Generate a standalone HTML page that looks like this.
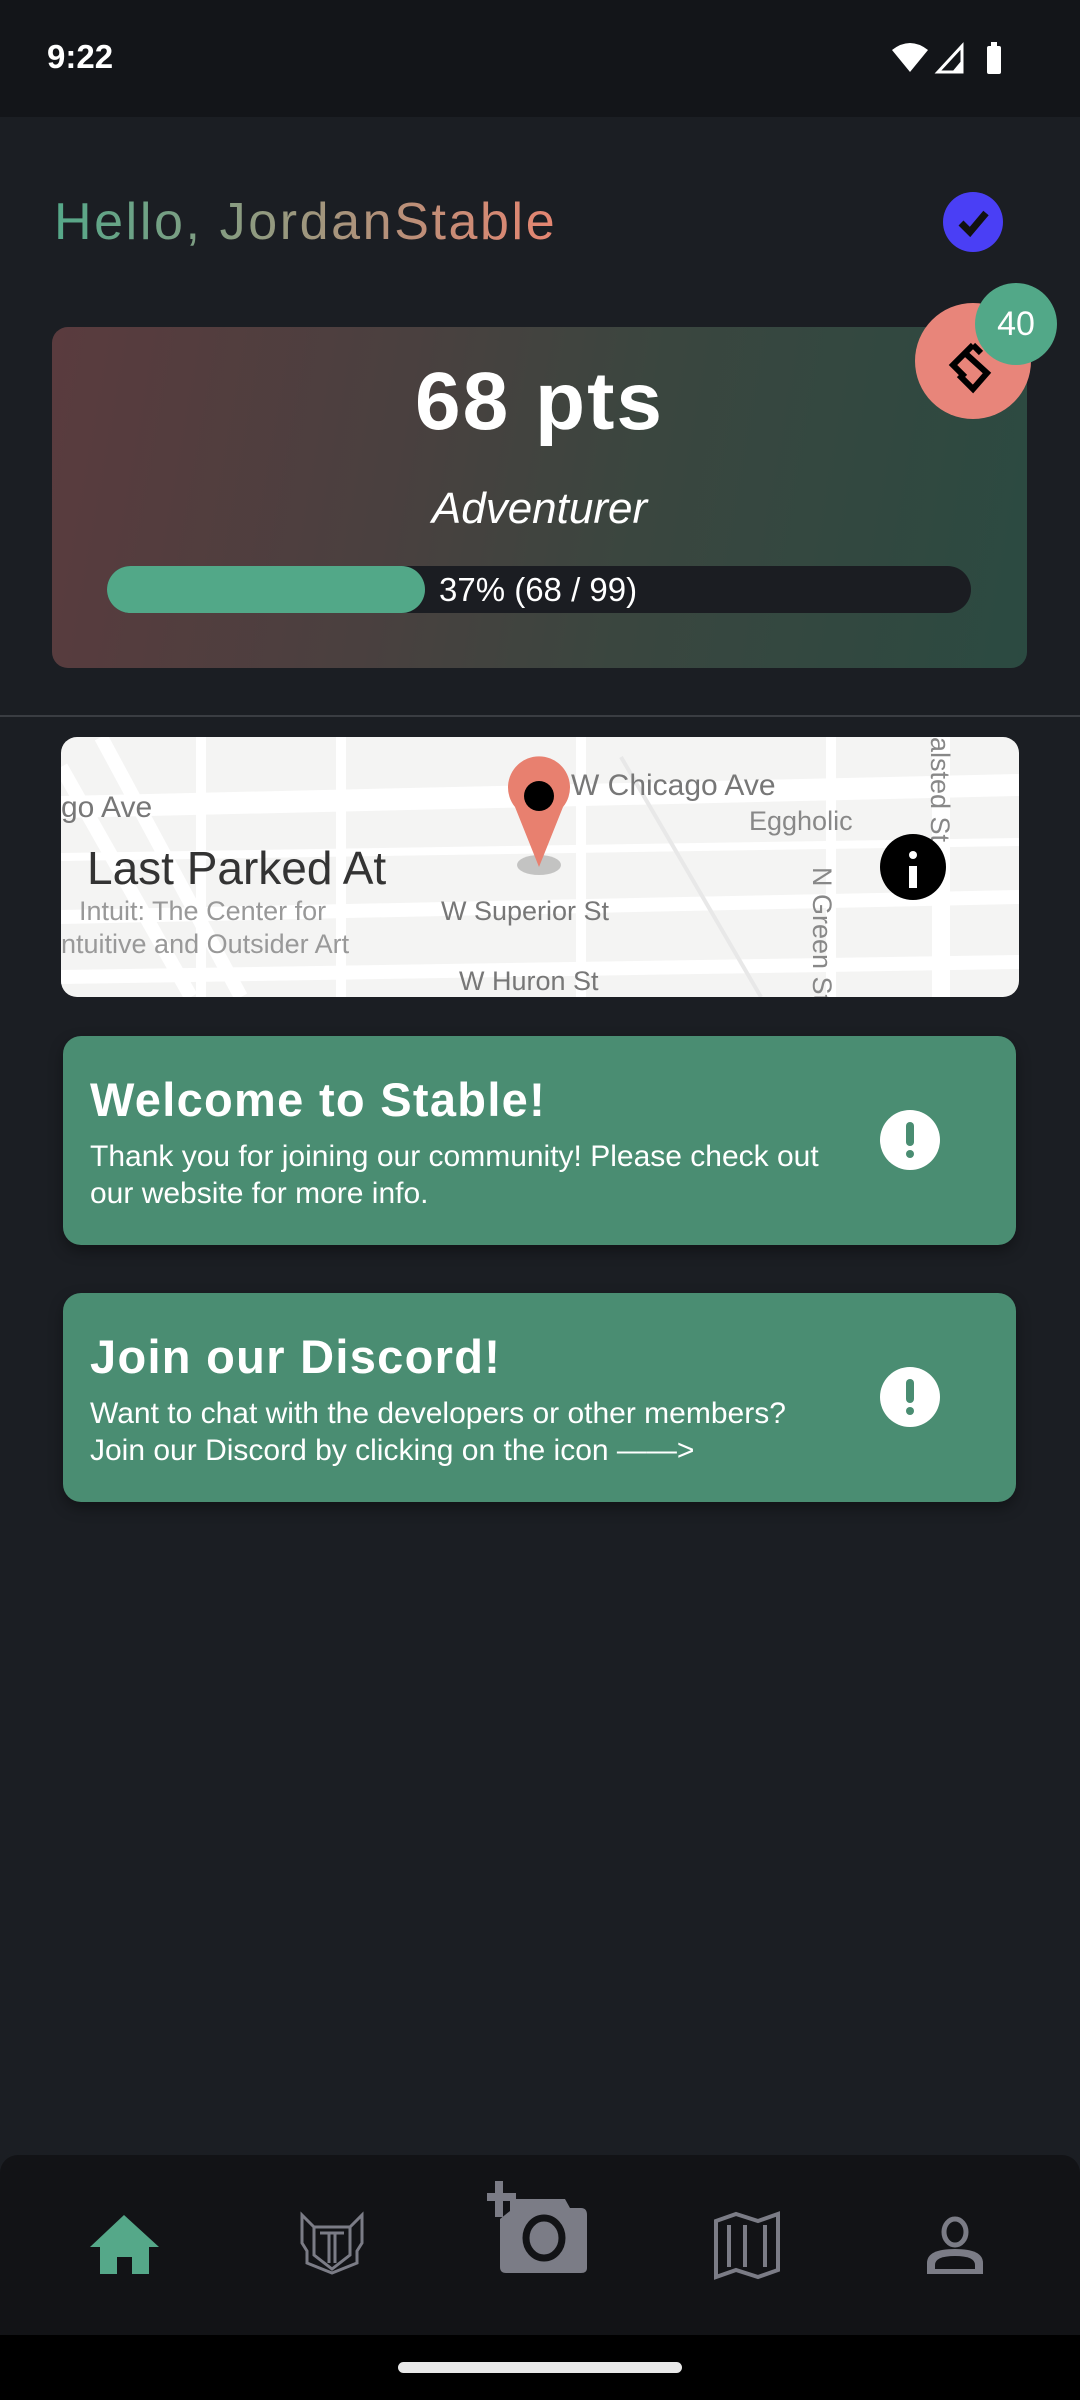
<!DOCTYPE html>
<html><head><meta charset="utf-8"><style>
*{margin:0;padding:0;box-sizing:border-box}
body{width:1080px;height:2400px;background:#1b1e23;font-family:"Liberation Sans",sans-serif;position:relative;overflow:hidden;color:#fff}
.abs{position:absolute}
.card{position:absolute;left:63px;width:953px;background:#4a8d72;border-radius:18px;box-shadow:0 6px 14px rgba(0,0,0,.35)}
.card h2{position:absolute;left:27px;font-size:47px;font-weight:bold;letter-spacing:1.3px}
.card p{position:absolute;left:27px;font-size:30px;line-height:37px;width:730px}
.ex{position:absolute;left:817px;width:60px;height:60px;border-radius:50%;background:#fff}
.ex:before{content:"";position:absolute;left:26px;top:12px;width:8px;height:24px;background:#4a8d72;border-radius:4px}
.ex:after{content:"";position:absolute;left:26px;top:40px;width:8px;height:8px;background:#4a8d72;border-radius:50%}
</style></head><body>
<div class="abs" style="left:0;top:0;width:1080px;height:117px;background:#131519"></div>
<div class="abs" style="left:47px;top:38px;font-size:33px;font-weight:bold;color:#fff">9:22</div>
<svg class="abs" style="left:890px;top:40px" width="120" height="36" viewBox="0 0 120 36">
<path d="M2 10 Q20 -4 38 10 L20 32 Z" fill="#fff"/>
<path d="M48 32 L72 6 L72 32 Z" fill="none" stroke="#fff" stroke-width="3"/>
<path d="M62 32 L72 20 L72 32Z" fill="#fff"/>
<rect x="97" y="6" width="14" height="28" rx="2" fill="#fff"/><rect x="101" y="2" width="6" height="5" fill="#fff"/>
</svg>
<div class="abs" style="left:54px;top:192px;font-size:52px;letter-spacing:2.6px;background:linear-gradient(90deg,#55a889,#8f9a80 40%,#e68571);-webkit-background-clip:text;color:transparent">Hello, JordanStable</div>
<div class="abs" style="left:943px;top:192px;width:60px;height:60px;border-radius:50%;background:#4a3ff5"></div>
<svg class="abs" style="left:943px;top:192px" width="60" height="60"><path d="M18 31 L27 40 L43 21" fill="none" stroke="#111" stroke-width="7"/></svg>

<div class="abs" style="left:52px;top:327px;width:975px;height:341px;border-radius:16px;background:linear-gradient(100deg,#5a3b3e 0%,#4a403f 35%,#3a463f 60%,#2b4a41 100%)"></div>
<div class="abs" style="left:52px;top:355px;width:975px;text-align:center;font-size:82px;font-weight:bold;letter-spacing:2px">68 pts</div>
<div class="abs" style="left:52px;top:484px;width:975px;text-align:center;font-size:44px;font-style:italic">Adventurer</div>
<div class="abs" style="left:107px;top:566px;width:864px;height:47px;border-radius:24px;background:#1b1d22"></div>
<div class="abs" style="left:107px;top:566px;width:318px;height:47px;border-radius:24px;background:#52a888"></div>
<div class="abs" style="left:439px;top:571px;font-size:33px">37% (68 / 99)</div>
<div class="abs" style="left:915px;top:303px;width:116px;height:116px;border-radius:50%;background:#e8857a"></div>
<svg class="abs" style="left:915px;top:303px" width="116" height="116"><path d="M58 42 L38 62 L50 74 M50 50 L72 70 L58 86 L44 72 M58 42 L66 50" fill="none" stroke="#000" stroke-width="6"/></svg>
<div class="abs" style="left:975px;top:283px;width:82px;height:82px;border-radius:50%;background:#52a888;text-align:center;line-height:82px;font-size:34px">40</div>

<div class="abs" style="left:0;top:715px;width:1080px;height:2px;background:#3a3d42"></div>

<div class="abs" style="left:61px;top:737px;width:958px;height:260px;border-radius:16px;background:#f4f4f3;overflow:hidden">
<svg width="958" height="260" style="position:absolute;left:0;top:0">
<g stroke="#fff" fill="none">
<path d="M0 70 L958 48" stroke-width="22"/>
<path d="M0 180 L958 160" stroke-width="14"/>
<path d="M0 240 L958 225" stroke-width="14"/>
<path d="M0 120 L958 105" stroke-width="8"/>
<path d="M520 0 L520 260 M280 0 L280 260 M140 0 L140 260 M770 0 L770 260" stroke-width="10"/>
<path d="M0 30 L130 260 M40 0 L180 260" stroke-width="14"/>
<path d="M880 0 L880 260" stroke-width="18"/>
<path d="M560 20 L700 260" stroke="#e8e8e8" stroke-width="4"/>
</g>
<g fill="#8a8a8a" font-family="Liberation Sans,sans-serif" font-size="27">
<text x="510" y="58" fill="#777" font-size="30">W Chicago Ave</text>
<text x="0" y="80" fill="#777" font-size="30">go Ave</text>
<text x="688" y="93" fill="#888">Eggholic</text>
<text x="380" y="183" fill="#777">W Superior St</text>
<text x="398" y="253" fill="#777">W Huron St</text>
<text x="18" y="183" fill="#999">Intuit: The Center for</text>
<text x="0" y="216" fill="#999">ntuitive and Outsider Art</text>
<text transform="translate(752,130) rotate(90)" fill="#888">N Green St</text>
<text transform="translate(870,0) rotate(90)" fill="#888">alsted St</text>
</g>
<ellipse cx="478" cy="128" rx="22" ry="10" fill="#000" opacity=".2"/>
<path d="M478 130 L454 70 A31 31 0 1 1 502 70 Z" fill="#e8806f"/>
<circle cx="478" cy="59" r="15" fill="#000"/>
</svg>
<div class="abs" style="left:26px;top:104px;font-size:46px;color:#333">Last Parked At</div>
<div class="abs" style="left:819px;top:97px;width:66px;height:66px;border-radius:50%;background:#000"></div>
<div class="abs" style="left:848px;top:129px;width:8px;height:22px;background:#fff"></div>
<div class="abs" style="left:848px;top:114px;width:8px;height:8px;background:#fff;border-radius:50%"></div>
</div>

<div class="card" style="top:1036px;height:209px">
<h2 style="top:36px">Welcome to Stable!</h2>
<p style="top:102px">Thank you for joining our community! Please check out our website for more info.</p>
<div class="ex" style="top:74px"></div>
</div>
<div class="card" style="top:1293px;height:209px">
<h2 style="top:36px">Join our Discord!</h2>
<p style="top:102px">Want to chat with the developers or other members? Join our Discord by clicking on the icon ——&gt;</p>
<div class="ex" style="top:74px"></div>
</div>

<div class="abs" style="left:0;top:2155px;width:1080px;height:185px;background:#121316;border-radius:18px 18px 0 0"></div>
<svg class="abs" style="left:0;top:2155px" width="1080" height="185">
<path d="M124 60 L159 92 L90 92 Z" fill="#55a889"/>
<rect x="100" y="90" width="49" height="29" fill="#55a889"/><rect x="117" y="102" width="15" height="17" fill="#121316"/>
<g fill="none" stroke="#7b7c86" stroke-width="3">
<path d="M302 60 L314 72 L350 72 L362 60 L362 88 L357 96 L357 108 L332 118 L307 108 L307 96 L302 88 Z"/>
<path d="M314 72 L314 100 L332 114 L350 100 L350 72 M320 78 L344 78 M329 78 L329 108 M335 78 L335 108"/>
</g>
<path d="M716 66 L736 59 L758 66 L778 59 L778 115 L758 122 L736 115 L716 122 Z M729 70 L729 112 M745 70 L745 112 M765 70 L765 112" fill="none" stroke="#7b7c86" stroke-width="4"/>
<path d="M499 26 L499 62 M487 42 L516 42" stroke="#7b7c86" stroke-width="8"/>
<path d="M500 64 L510 56 L510 44 L565 44 L570 53 L581 53 Q587 53 587 60 L587 113 Q587 118 581 118 L506 118 Q500 118 500 112 Z" fill="#7b7c86"/>
<ellipse cx="544" cy="83" rx="18" ry="20" fill="none" stroke="#121316" stroke-width="7"/>
<ellipse cx="955" cy="77" rx="11" ry="13" fill="none" stroke="#7b7c86" stroke-width="5"/>
<path d="M927 119 L927 108 Q927 94 955 94 Q983 94 983 108 L983 119 Z" fill="#7b7c86"/>
<path d="M935 114 L935 110 Q935 101 955 101 Q975 101 975 110 L975 114Z" fill="#121316"/>
</svg>
<div class="abs" style="left:0;top:2335px;width:1080px;height:65px;background:#000"></div>
<div class="abs" style="left:398px;top:2362px;width:284px;height:11px;border-radius:6px;background:#e8e8e8"></div>
</body></html>
